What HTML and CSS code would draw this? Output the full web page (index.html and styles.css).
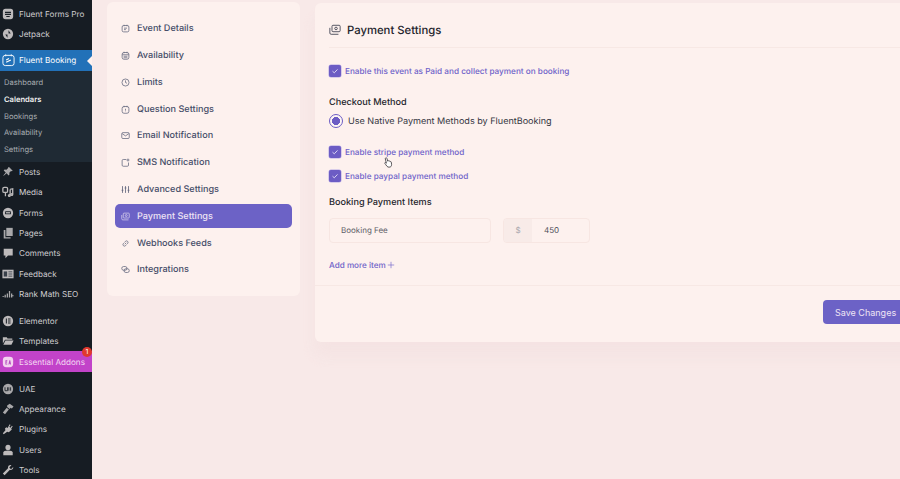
FILE: index.html
```html
<!DOCTYPE html>
<html lang="en">
<head>
    <meta charset="UTF-8">
    <title>Payment Settings</title>
    <link rel="stylesheet" href="styles.css">
</head>
<body>
<div class="page">
    <nav class="adminbar">
        <ul class="menu menu-first">
            <li><svg viewBox="0 0 14 14"><rect x="1" y="1" width="12" height="12" rx="3" fill="#bdbabb"/><path d="M3.5 4.500h7v1.500h-7zM3.500 7h7v1.300h-7zM5 9.400h4v1H5z" fill="#1a2027"/></svg>Fluent Forms Pro</li>
            <li><svg viewBox="0 0 14 14"><circle cx="7" cy="7" r="6" fill="#bdbabb"/><path d="M7.600 2.500v4h2.600zM6.400 11.500v-4H3.800z" fill="#1a2027"/></svg>Jetpack</li>
        </ul>
        <div class="menu-current"><svg viewBox="0 0 14 14" fill="none" stroke="#fff" stroke-width="1"><rect x="1" y="2" width="12" height="11" rx="2.500"/><path d="M4 1v2M10 1v2"/><path d="M4.500 9.500l5-2.500M4.500 7l3-1.500" stroke-width="1.200"/></svg>Fluent Booking</div>
        <ul class="submenu">
            <li>Dashboard</li>
            <li class="on">Calendars</li>
            <li>Bookings</li>
            <li>Availability</li>
            <li>Settings</li>
        </ul>
        <ul class="menu">
            <li><svg viewBox="0 0 14 14"><path d="M8.500 1.500l4 4-1 .6-1-.3-2 2 .2 2.200-1 1-2.300-2.400L2 11.500l-.5-.3 2.900-3.700L2 5.200l1-1 2.200.2 2-2-.3-1z" fill="#a9a8aa"/></svg>Posts</li>
            <li><svg viewBox="0 0 14 14" fill="none" stroke="#bdbabb" stroke-width="1.500"><rect x="1" y="1.500" width="5.500" height="6" rx="1.500"/><path d="M4 7.500V12M9.500 4v7M9.500 4l3-.8v6.500"/><circle cx="8.500" cy="11" r="1"/><circle cx="11.500" cy="10" r="1"/></svg>Media</li>
            <li><svg viewBox="0 0 14 14"><circle cx="7" cy="7" r="6" fill="#bdbabb"/><rect x="3.500" y="5" width="7" height="3.500" rx="1" fill="#1a2027"/><rect x="4.500" y="6" width="5" height="1.500" fill="#bdbabb"/></svg>Forms</li>
            <li><svg viewBox="0 0 14 14" fill="#a9a8aa"><path d="M5 1h7.500v9.500H5z"/><path d="M2 3.500h2V12h6v1.500H2z"/></svg>Pages</li>
            <li><svg viewBox="0 0 14 14"><path d="M2 2h10.500v8H7l-3 3v-3H2z" fill="#bdbabb"/></svg>Comments</li>
            <li><svg viewBox="0 0 14 14"><rect x="0.500" y="2" width="13" height="10" fill="#bdbabb"/><rect x="2" y="4" width="4" height="6" fill="#39404a"/><path d="M7.500 4.500H12M7.500 7H12M7.500 9.500H12" stroke="#39404a"/></svg>Feedback</li>
            <li><svg viewBox="0 0 14 14" fill="#a9a8aa"><path d="M.5 9.500h2v1h-2zM3 8h1.500v3H3zM5.500 6.500H7V11H5.500zM8 3.500h1.500V11H8zM10.500 6.500H12v2h1.500v1H12v1.500h-1.500z"/></svg>Rank Math SEO</li>
        </ul>
        <ul class="menu menu-gap">
            <li><svg viewBox="0 0 14 14"><circle cx="7" cy="7" r="6" fill="#bdbabb"/><path d="M4.500 4h1.200v6H4.500zM7 4h3v1.200H7zM7 6.400h3v1.200H7zM7 8.800h3V10H7z" fill="#1a2027"/></svg>Elementor</li>
            <li><svg viewBox="0 0 14 14" fill="#bdbabb"><path d="M1 2.500h4.500l1 1.500H12v1.500H3.500L1 10z"/><path d="M4 6.500h9.500L11 11.500H1.500z"/></svg>Templates</li>
        </ul>
        <div class="menu-addons"><svg viewBox="0 0 14 14"><rect x="1" y="1" width="12" height="12" rx="4" fill="#f3d3ef"/><path d="M4 5h2.200v1H5v.6h1v1H5V9h1.200v1H4zM7.500 10l1.100-5h1l1 5h-1l-.2-1H8.600l-.2 1z" fill="#b548c0"/></svg>Essential Addons<span class="badge">1</span></div>
        <ul class="menu menu-gap">
            <li><svg viewBox="0 0 14 14"><circle cx="7" cy="7" r="6" fill="#a9a8aa"/><path d="M3.500 5v4h3V5M8 5v4M10 5v4" fill="none" stroke="#1a2027"/></svg>UAE</li>
            <li><svg viewBox="0 0 14 14" fill="#a9a8aa"><path d="M6 3l3-2 4.500 3-2 2.500-1.500-1-1 1.500-3-2.200zM5.500 5.500l2.500 2-4.500 5.500-2.500-2z"/></svg>Appearance</li>
            <li><svg viewBox="0 0 14 14" fill="#bdbabb"><path d="M9 1.500l1 .7-1.500 2.300 1.500 1 1.500-2.300 1 .7-1.800 2.800.8 1-3.500 3-2-.5L2 13l-1-1 3-3.500-.5-2L5 5l1.500.8z"/></svg>Plugins</li>
            <li><svg viewBox="0 0 14 14" fill="#bdbabb"><circle cx="7" cy="4" r="3"/><path d="M1.500 13v-3c0-1.500 2-2.500 5.500-2.500s5.500 1 5.500 2.500v3z"/></svg>Users</li>
            <li><svg viewBox="0 0 14 14" fill="#bdbabb"><path d="M13 3.500L10.500 6l-2-2L11 1.500c-2-.8-4.500.8-4 3.500L1 11l2 2 6-6c2.500.6 4.800-1.500 4-3.500z"/></svg>Tools</li>
        </ul>
    </nav>

    <div class="content">
        <aside class="steps">
            <a class="step"><svg viewBox="0 0 12 12"><rect x="1.500" y="2" width="9" height="8.500" rx="2"/><path d="M4 1v2M8 1v2M4 5.500h4M4 7.500h2.500"/></svg>Event Details</a>
            <a class="step"><svg viewBox="0 0 12 12"><rect x="1.500" y="2" width="9" height="9" rx="2.500"/><path d="M1.500 5h9M4 1v2M8 1v2M3.500 7h5M3.500 9h5"/></svg>Availability</a>
            <a class="step"><svg viewBox="0 0 12 12"><circle cx="6" cy="6" r="4.700"/><path d="M6 3.200V6l2 1"/></svg>Limits</a>
            <a class="step"><svg viewBox="0 0 12 12"><rect x="1.500" y="2" width="9" height="9" rx="2.500"/><path d="M4 1v2M8 1v2M6 5v2.500M6 8.800v.4"/></svg>Question Settings</a>
            <a class="step"><svg viewBox="0 0 12 12"><rect x="1" y="2.200" width="10" height="7.800" rx="1.500"/><path d="M1.500 3.500L6 6.500l4.500-3"/></svg>Email Notification</a>
            <a class="step"><svg viewBox="0 0 12 12"><path d="M7 2H3a1.500 1.500 0 0 0-1.500 1.500v6A1.500 1.500 0 0 0 3 11h5.500A1.500 1.500 0 0 0 10 9.500V6"/><circle cx="9.300" cy="2.700" r="1.300"/></svg>SMS Notification</a>
            <a class="step"><svg viewBox="0 0 12 12"><path d="M2 1.500v9M6 1.500v9M10 1.500v9M.8 7h2.400M4.800 4h2.400M8.800 7h2.400" stroke-width="1.100"/></svg>Advanced Settings</a>
            <a class="step step-active"><svg viewBox="0 0 12 12"><rect x="3" y="1.500" width="8" height="6.500" rx="1"/><circle cx="7" cy="4.700" r="1.300"/><path d="M1 4v5a1.500 1.500 0 0 0 1.500 1.500H10"/></svg>Payment Settings</a>
            <a class="step"><svg viewBox="0 0 12 12"><path d="M5 7l2-2M4.500 4.800L3 6.300a2 2 0 0 0 2.800 2.800L7 7.800M7.500 7.200L9 5.700a2 2 0 0 0-2.800-2.800L5 4.200"/></svg>Webhooks Feeds</a>
            <a class="step"><svg viewBox="0 0 12 12"><rect x="1" y="2" width="7" height="5" rx="2.500"/><rect x="4" y="5" width="7" height="5" rx="2.500"/></svg>Integrations</a>
        </aside>

        <main class="panel">
            <h1 class="panel-title"><svg viewBox="0 0 14 14"><rect x="3.500" y="1.500" width="9.500" height="7.500" rx="1.200"/><circle cx="8.200" cy="5.200" r="1.500"/><path d="M1 4.500v6A1.500 1.500 0 0 0 2.500 12H11"/></svg>Payment Settings</h1>
            <div class="panel-body">
                <label class="check"><span class="box"><svg viewBox="0 0 12 12"><path d="M3.500 6.200l1.800 1.600 3.200-3.400"/></svg></span>Enable this event as Paid and collect payment on booking</label>
                <h2 class="field-title title-checkout">Checkout Method</h2>
                <label class="radio"><span class="dot"></span>Use Native Payment Methods by FluentBooking</label>
                <div class="methods">
                    <label class="check"><span class="box"><svg viewBox="0 0 12 12"><path d="M3.500 6.200l1.800 1.600 3.200-3.400"/></svg></span>Enable stripe payment method</label>
                    <label class="check"><span class="box"><svg viewBox="0 0 12 12"><path d="M3.500 6.200l1.800 1.600 3.200-3.400"/></svg></span>Enable paypal payment method</label>
                </div>
                <h2 class="field-title title-items">Booking Payment Items</h2>
                <div class="items">
                    <div class="input input-name">Booking Fee</div>
                    <div class="input input-price"><span class="currency">$</span><span class="amount">450</span></div>
                </div>
                <a class="add-item">Add more item<svg viewBox="0 0 10 10"><path d="M5 1v8M1 5h8"/></svg></a>
            </div>
            <div class="panel-foot"><button class="save">Save Changes</button></div>
            <svg class="cursor" viewBox="0 0 12 14"><path d="M3.200 1.500c.8-.4 1.400 0 1.600.8l.8 3 .4-.3c.6-.3 1.100 0 1.300.4.500-.3 1.100-.1 1.300.4.600-.2 1.100.1 1.300.7l.4 2.600c.1 1.500-.6 2.900-1.700 3.400H6c-1-.5-1.800-1.600-2.500-2.700L2.200 8c-.3-.7.4-1.300 1.100-.9l.8.7-1.300-5c-.1-.6 0-1.100.4-1.300z"/></svg>
        </main>
    </div>
</div>
</body>
</html>
```
FILE: styles.css
```css
html, body {
    margin: 0;
    padding: 0;
    height: 100%;
    overflow: hidden;
    background-color: #f8e9e8;
    font-family: 'Inter', 'Liberation Sans', sans-serif;
    text-rendering: geometricPrecision;
}

.page {
    display: flex;
    height: 479px;
    overflow: hidden;
}

/* wp admin menu */
.adminbar {
    flex: 0 0 92px;
    width: 92px;
    background-color: #161c23;
    color: #cfcdd0;
    font-size: 8.150px;
    overflow: hidden;
}
.menu, .submenu {
    list-style: none;
    margin: 0;
    padding: 0;
}
.menu li, .menu-current, .menu-addons {
    display: flex;
    align-items: center;
    gap: 5px;
    height: 20.300px;
    padding-left: 2px;
    white-space: nowrap;
}
.adminbar svg {
    flex: 0 0 12px;
    width: 12px;
    height: 12px;
}
.menu-first { padding-top: 3.400px; }
.menu-gap { padding-top: 6.500px; }

.menu-current {
    position: relative;
    height: 21px;
    margin-top: 5.600px;
    background-color: #2271b8;
    color: #fff;
}
.menu-current svg {
    flex-basis: 13px;
    width: 13px;
    height: 14px;
    margin-right: -1px;
}
.menu-current::after {
    content: '';
    position: absolute;
    right: 0;
    top: 6px;
    border: 5px solid transparent;
    border-right-color: #fdf1ee;
    border-left-width: 0;
}
.submenu {
    background-color: #1f2a34;
    padding: 4px 0;
    font-size: 7.600px;
    color: #a6abb0;
}
.submenu li {
    display: flex;
    align-items: center;
    height: 16.700px;
    padding-left: 4px;
}
.submenu .on { color: #f2f2f2; font-weight: 600; }

.menu-addons {
    position: relative;
    height: 21px;
    background-color: #c243c9;
    color: #f4dcf3;
}
.badge {
    position: absolute;
    top: -4px;
    right: 0;
    width: 10px;
    height: 10px;
    border-radius: 50%;
    background-color: #e0392e;
    color: #fff;
    font-size: 7px;
    line-height: 10px;
    text-align: center;
}

/* content */
.content {
    flex: 1;
    display: flex;
    align-items: flex-start;
    gap: 15px;
    padding: 2px 0 0 15px;
    min-width: 0;
}

.steps {
    flex: 0 0 193px;
    box-sizing: border-box;
    height: 294px;
    display: flex;
    flex-direction: column;
    gap: 2.800px;
    padding: 14.800px 8px 0;
    background-color: #fdf1ee;
    border-radius: 6px;
}
.step {
    display: flex;
    align-items: center;
    gap: 7px;
    height: 24px;
    padding-left: 6px;
    border-radius: 5px;
    font-size: 9.100px;
    font-weight: 450;
    color: #454d68;
}
.step svg {
    flex: 0 0 9px;
    width: 9px;
    height: 9px;
    fill: none;
    stroke: currentColor;
    stroke-width: 1;
    opacity: 0.85;
}
.step-active {
    background-color: #6c62c6;
    color: #eee4f4;
}

.panel {
    position: relative;
    flex: 0 0 608px;
    box-sizing: border-box;
    height: 339px;
    margin-top: 1px;
    background-color: #fdf1ee;
    border-radius: 6px;
    box-shadow: 0 14px 14px rgba(240, 220, 220, 0.4);
}
.panel-title {
    display: flex;
    align-items: center;
    gap: 6px;
    height: 45px;
    margin: 0 0 0 14px;
    padding-top: 10px;
    box-sizing: border-box;
    border-bottom: 1px solid #f7e8e4;
    font-size: 11.300px;
    font-weight: 500;
    color: #23242c;
}
.panel-title svg {
    width: 12px;
    height: 12px;
    fill: none;
    stroke: #4e4f5c;
    stroke-width: 1.100;
}
.panel-body {
    height: 238px;
    box-sizing: border-box;
    padding: 17px 0 0 14px;
    border-bottom: 1px solid #f7e8e4;
}

.check {
    display: flex;
    align-items: center;
    gap: 4px;
    height: 12px;
    font-size: 8.200px;
    font-weight: 500;
    color: #6f63c9;
}
.box {
    flex: 0 0 12px;
    width: 12px;
    height: 12px;
    box-sizing: border-box;
    border-radius: 2px;
    background-color: #6c5cc4;
    box-shadow: 0 0 0 0.500px #b4a7e4;
}
.box svg {
    display: block;
    fill: none;
    stroke: #d9d3f2;
    stroke-width: 1;
}

.field-title {
    margin: 0;
    font-size: 9.150px;
    font-weight: 500;
    line-height: 12px;
    color: #25262c;
}
.title-checkout { margin-top: 20px; }
.title-items { margin-top: 15px; }

.radio {
    display: flex;
    align-items: center;
    gap: 5px;
    height: 14px;
    margin-top: 5px;
    font-size: 9.070px;
    color: #34353f;
}
.dot {
    flex: 0 0 14px;
    width: 14px;
    height: 14px;
    box-sizing: border-box;
    border: 1px solid #6c5cc4;
    border-radius: 50%;
    background: radial-gradient(circle, #6c5cc4 0 3.800px, #fdf6f4 4.300px);
}

.methods {
    display: flex;
    flex-direction: column;
    gap: 12px;
    margin-top: 18px;
}

.items {
    display: flex;
    gap: 12px;
    margin-top: 9px;
}
.input {
    box-sizing: border-box;
    height: 25px;
    border: 1px solid #f7e6e2;
    border-radius: 4px;
    font-size: 8px;
    color: #5f5f68;
}
.input-name {
    width: 162px;
    padding-left: 11px;
    line-height: 23px;
}
.input-price {
    display: flex;
    width: 87px;
    overflow: hidden;
}
.currency {
    width: 28px;
    line-height: 23px;
    text-align: center;
    background-color: #f8ebe8;
    color: #a9a6ad;
}
.amount {
    padding-left: 12px;
    line-height: 23px;
    color: #4c4d57;
}
.add-item {
    display: flex;
    align-items: center;
    gap: 1px;
    margin-top: 16px;
    font-size: 8.150px;
    font-weight: 500;
    line-height: 12px;
    color: #6f63c9;
}
.add-item svg {
    width: 8px;
    height: 8px;
    fill: none;
    stroke: #6f63c9;
    stroke-width: 0.800;
}

.panel-foot {
    display: flex;
    justify-content: flex-end;
    padding: 14px 14px 0 0;
}
.save {
    width: 86px;
    height: 24px;
    padding: 0 0 0 12px;
    border: none;
    border-radius: 4px;
    background-color: #6c62c6;
    color: #eee4f4;
    font-family: inherit;
    font-size: 9px;
    text-align: left;
}

/* mouse pointer from the recording */
.cursor {
    position: absolute;
    left: 68px;
    top: 153px;
    width: 10px;
    height: 13px;
    fill: #fff;
    stroke: #3c3a3d;
    stroke-width: 1;
}
```
